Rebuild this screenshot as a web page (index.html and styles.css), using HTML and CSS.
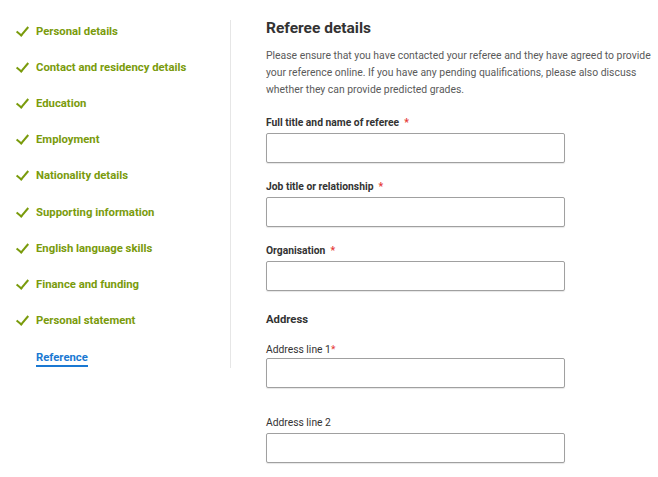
FILE: index.html
```html
<!DOCTYPE html>
<html lang="en">
<head>
  <meta charset="UTF-8">
  <title>Referee details</title>
  <link rel="stylesheet" href="styles.css">
</head>
<body>
  <div class="page">
    <ul class="steps">
      <li class="step done"><span class="tick"></span>Personal details</li>
      <li class="step done"><span class="tick"></span>Contact and residency details</li>
      <li class="step done"><span class="tick"></span>Education</li>
      <li class="step done"><span class="tick"></span>Employment</li>
      <li class="step done"><span class="tick"></span>Nationality details</li>
      <li class="step done"><span class="tick"></span>Supporting information</li>
      <li class="step done"><span class="tick"></span>English language skills</li>
      <li class="step done"><span class="tick"></span>Finance and funding</li>
      <li class="step done"><span class="tick"></span>Personal statement</li>
      <li class="step current"><span class="tick"></span><span class="current-label">Reference</span></li>
    </ul>

    <div class="form">
      <h2>Referee details</h2>
      <p class="intro">Please ensure that you have contacted your referee and they have agreed to provide your reference online. If you have any pending qualifications, please also discuss whether they can provide predicted grades.</p>

      <div class="field">
        <label class="strong">Full title and name of referee &nbsp;<span class="req">*</span></label>
        <input type="text">
      </div>
      <div class="field">
        <label class="strong">Job title or relationship &nbsp;<span class="req">*</span></label>
        <input type="text">
      </div>
      <div class="field">
        <label class="strong">Organisation &nbsp;<span class="req">*</span></label>
        <input type="text">
      </div>

      <h3>Address</h3>
      <div class="field spaced">
        <label class="tight">Address line 1<span class="req">*</span></label>
        <input type="text">
      </div>
      <div class="field">
        <label>Address line 2</label>
        <input type="text">
      </div>
    </div>
  </div>
</body>
</html>
```

FILE: styles.css
```css
:root {
  --green: #7a9b0c;
  --blue: #1a78d2;
  --text: #333;
}

body {
  margin: 0;
  font-family: Roboto, "Liberation Sans", sans-serif;
  color: var(--text);
  background: #fff;
}

.page {
  display: flex;
  padding-top: 18px;
}

.steps {
  list-style: none;
  margin: 2px 0 0;
  padding: 3px 0 0 15px;
  width: 215px;
  height: 345px;
  border-right: 1px solid #e6e6e6;
}

.step {
  display: flex;
  align-items: center;
  height: 36.2px;
  font-size: 11.3px;
  font-weight: bold;
  color: var(--green);
}

.step:first-child {
  margin-top: -10px;
}

.tick {
  width: 14px;
  height: 11px;
  margin-right: 7px;
  position: relative;
}

.done .tick::after {
  content: "";
  position: absolute;
  left: 4px;
  top: -2px;
  width: 5px;
  height: 10px;
  border: solid var(--green);
  border-width: 0 2.5px 2.5px 0;
  transform: rotate(40deg);
}

.current {
  color: var(--blue);
}

.current-label {
  border-bottom: 2px solid var(--blue);
  padding-bottom: 1px;
  margin-top: 5px;
}

.form {
  padding-left: 35px;
  width: 385px;
}

h2 {
  font-size: 15.5px;
  margin: 0 0 9px;
  line-height: 20px;
}

.intro {
  font-size: 10.4px;
  line-height: 17px;
  color: #5a5a5a;
  margin: 0 0 19px;
}

.field {
  margin-bottom: 18px;
}

.field.spaced {
  margin-bottom: 29px;
}

label {
  display: block;
  font-size: 10.3px;
  line-height: 12px;
  margin-bottom: 4px;
  color: #333;
}

label.strong {
  font-weight: bold;
}

label.tight {
  margin-bottom: 2px;
}

.req {
  color: #e53935;
}

input {
  display: block;
  box-sizing: border-box;
  width: 299px;
  height: 30px;
  border: 1px solid #a0a0a0;
  border-radius: 2px;
  box-shadow: 0 1px 1px rgba(0,0,0,0.1);
  margin: 0;
}

h3 {
  font-size: 11.3px;
  margin: 22px 0 17px;
  line-height: 14px;
}
```
